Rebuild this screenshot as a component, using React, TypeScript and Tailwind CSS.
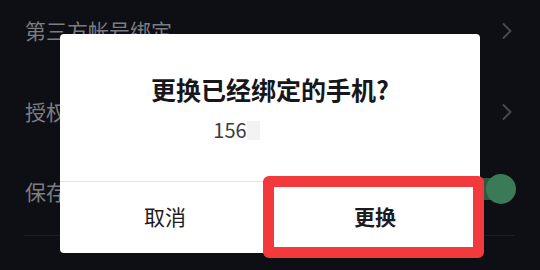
import { ChevronRight } from 'lucide-react';

const font = { fontFamily: '"Noto Sans CJK SC", "Noto Sans", sans-serif' };

function SettingRow({ label, right, divider }: { label: string; right: 'chevron' | 'toggle'; divider?: boolean }) {
  return (
    <div className={`flex items-center justify-between ml-[24px] mr-[25px] ${divider ? 'h-[84px] pb-[3px] border-b border-[#1e1f25]' : 'h-[81px]'}`}>
      <span className="text-[21px] text-[#7c7d82] pl-[1px]">{label}</span>
      {right === 'chevron' ? (
        <ChevronRight className="w-[28px] h-[28px] text-[#4a4b50] -mr-[6px]" strokeWidth={1.6} />
      ) : (
        <div className="relative w-[46px] h-[22px] mb-[6px] rounded-full bg-[#2c5a42] mr-[1px]">
          <div className="absolute right-[-2px] top-[-4px] w-[30px] h-[30px] rounded-full bg-[#3b7a57]" />
        </div>
      )}
    </div>
  );
}

export default function App() {
  return (
    <div className="relative w-[540px] h-[270px] overflow-hidden bg-[#0e0f14]" style={font}>
      <div className="-mt-[10px]">
        <SettingRow label="第三方帐号绑定" right="chevron" />
        <SettingRow label="授权管理" right="chevron" />
        <SettingRow label="保存登录信息" right="toggle" divider />
      </div>

      {/* dialog */}
      <div className="absolute left-[60px] top-[34px] w-[420px] h-[219px] bg-white rounded-[4px] flex flex-col">
        <div className="h-[147px] flex flex-col items-center">
          <h2 className="mt-[40px] text-[25px] leading-[30px] font-bold text-[#16161b]">更换已经绑定的手机?</h2>
          <div className="mt-[15px] mr-[67px] flex items-center">
            <span className="text-[20px] leading-[22px] text-[#3c3c40]">156</span>
            <span className="w-[13px] h-[19px] bg-[#f3f3f3]" />
          </div>
        </div>
        <div className="flex flex-1 border-t border-[#e3e3e3]">
          <button className="flex-1 flex items-center justify-center text-[21px] text-[#1c1c20] pb-[1px]">取消</button>
          <button className="flex-1 flex items-center justify-center text-[21px] font-bold text-[#1c1c20] pb-[1px]">更换</button>
        </div>
      </div>

      {/* highlight */}
      <div className="absolute left-[263px] top-[176px] w-[221px] h-[82px] border-[11px] border-[#f2393b] rounded-[6px]" />
    </div>
  );
}
